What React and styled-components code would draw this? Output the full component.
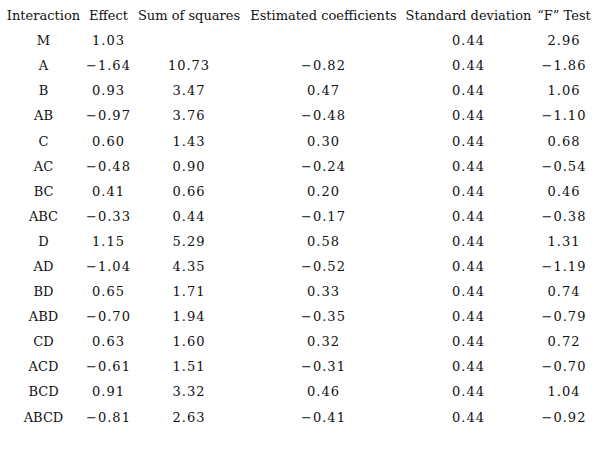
import React from 'react';
import styled, { createGlobalStyle } from 'styled-components';

const GlobalStyle = createGlobalStyle`
  html, body {
    margin: 0;
    padding: 0;
    background: #fff;
  }
  body {
    width: 600px;
    height: 450px;
    overflow: hidden;
    font-family: "DejaVu Serif", "Liberation Serif", serif;
  }
`;

const columns = [
  { title: 'Interaction', width: 81 },
  { title: 'Effect', width: 49 },
  { title: 'Sum of squares', width: 112 },
  { title: 'Estimated coefficients', width: 157 },
  { title: 'Standard deviation', width: 133 },
  { title: '\u201cF\u201d Test', width: 58 },
];

const rows = [
  ['M', '1.03', '', '', '0.44', '2.96'],
  ['A', '\u22121.64', '10.73', '\u22120.82', '0.44', '\u22121.86'],
  ['B', '0.93', '3.47', '0.47', '0.44', '1.06'],
  ['AB', '\u22120.97', '3.76', '\u22120.48', '0.44', '\u22121.10'],
  ['C', '0.60', '1.43', '0.30', '0.44', '0.68'],
  ['AC', '\u22120.48', '0.90', '\u22120.24', '0.44', '\u22120.54'],
  ['BC', '0.41', '0.66', '0.20', '0.44', '0.46'],
  ['ABC', '\u22120.33', '0.44', '\u22120.17', '0.44', '\u22120.38'],
  ['D', '1.15', '5.29', '0.58', '0.44', '1.31'],
  ['AD', '\u22121.04', '4.35', '\u22120.52', '0.44', '\u22121.19'],
  ['BD', '0.65', '1.71', '0.33', '0.44', '0.74'],
  ['ABD', '\u22120.70', '1.94', '\u22120.35', '0.44', '\u22120.79'],
  ['CD', '0.63', '1.60', '0.32', '0.44', '0.72'],
  ['ACD', '\u22120.61', '1.51', '\u22120.31', '0.44', '\u22120.70'],
  ['BCD', '0.91', '3.32', '0.46', '0.44', '1.04'],
  ['ABCD', '\u22120.81', '2.63', '\u22120.41', '0.44', '\u22120.92'],
];

const Table = styled.div`
  display: grid;
  grid-template-columns: ${({ $cols }) => $cols};
  grid-auto-rows: 25.1px;
  padding: 3px 0 0 3px;
  color: #111;
  font-size: 13px;
`;

const Cell = styled.div`
  display: flex;
  align-items: center;
  justify-content: center;
  white-space: nowrap;
  letter-spacing: ${({ $num }) => ($num ? '1px' : '0')};
`;

const App = () => {
  const cols = columns.map((c) => `${c.width}px`).join(' ');
  return (
    <>
      <GlobalStyle />
      <Table $cols={cols}>
        {columns.map((c) => (
          <Cell key={c.title}>{c.title}</Cell>
        ))}
        {rows.map((r) =>
          r.map((v, i) => (
            <Cell key={r[0] + i} $num={i > 0}>
              {v}
            </Cell>
          ))
        )}
      </Table>
    </>
  );
};

export default App;
